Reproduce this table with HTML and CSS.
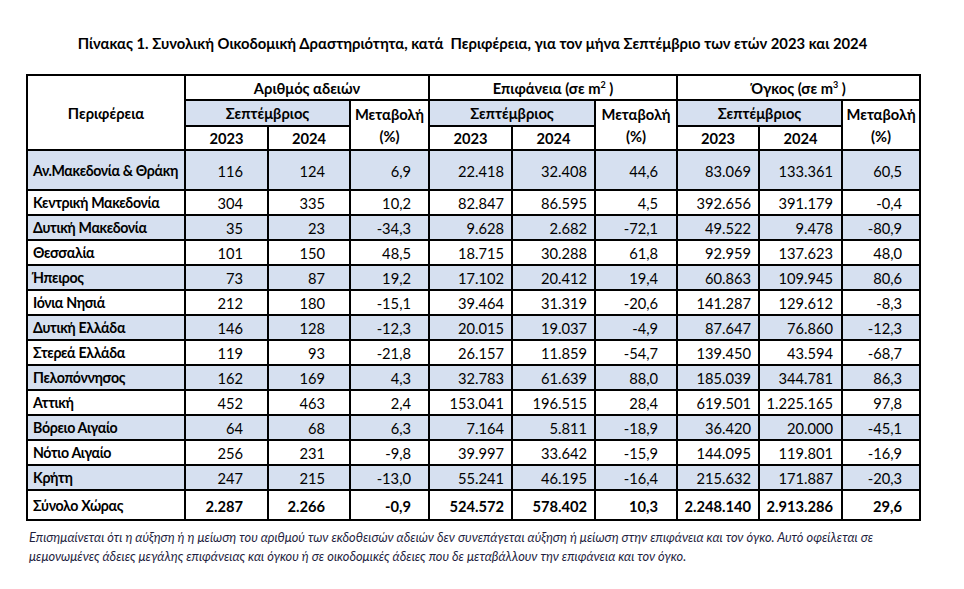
FILE: index.html
```html
<!DOCTYPE html>
<html lang="el">
<head>
<meta charset="utf-8">
<title>Πίνακας 1</title>
<link rel="stylesheet" href="styles.css">
</head>
<body>
<div class="page">
  <h1 class="title">Πίνακας 1. Συνολική Οικοδομική Δραστηριότητα, κατά&nbsp; Περιφέρεια, για τον μήνα Σεπτέμβριο των ετών 2023 και 2024</h1>
  <table class="stats">
    <colgroup>
      <col class="c1"><col class="c2"><col class="c3"><col class="c4"><col class="c5"><col class="c6"><col class="c7"><col class="c8"><col class="c9"><col class="c10">
    </colgroup>
    <thead>
      <tr class="h1">
        <th rowspan="3" class="region-head">Περιφέρεια</th>
        <th colspan="3" class="group">Αριθμός αδειών</th>
        <th colspan="3" class="group">Επιφάνεια (σε m<sup>2</sup> )</th>
        <th colspan="3" class="group">Όγκος (σε m<sup>3</sup> )</th>
      </tr>
      <tr class="h2">
        <th colspan="2" class="month">Σεπτέμβριος</th>
        <th rowspan="2" class="change">Μεταβολή<br>(%)</th>
        <th colspan="2" class="month">Σεπτέμβριος</th>
        <th rowspan="2" class="change">Μεταβολή<br>(%)</th>
        <th colspan="2" class="month">Σεπτέμβριος</th>
        <th rowspan="2" class="change">Μεταβολή<br>(%)</th>
      </tr>
      <tr class="h3">
        <th>2023</th><th>2024</th>
        <th>2023</th><th>2024</th>
        <th>2023</th><th>2024</th>
      </tr>
    </thead>
    <tbody>
      <tr class="shade first"><td>Αν.Μακεδονία &amp; Θράκη</td><td>116</td><td>124</td><td>6,9</td><td>22.418</td><td>32.408</td><td>44,6</td><td>83.069</td><td>133.361</td><td>60,5</td></tr>
      <tr><td>Κεντρική Μακεδονία</td><td>304</td><td>335</td><td>10,2</td><td>82.847</td><td>86.595</td><td>4,5</td><td>392.656</td><td>391.179</td><td>-0,4</td></tr>
      <tr class="shade"><td>Δυτική Μακεδονία</td><td>35</td><td>23</td><td>-34,3</td><td>9.628</td><td>2.682</td><td>-72,1</td><td>49.522</td><td>9.478</td><td>-80,9</td></tr>
      <tr><td>Θεσσαλία</td><td>101</td><td>150</td><td>48,5</td><td>18.715</td><td>30.288</td><td>61,8</td><td>92.959</td><td>137.623</td><td>48,0</td></tr>
      <tr class="shade"><td>Ήπειρος</td><td>73</td><td>87</td><td>19,2</td><td>17.102</td><td>20.412</td><td>19,4</td><td>60.863</td><td>109.945</td><td>80,6</td></tr>
      <tr><td>Ιόνια Νησιά</td><td>212</td><td>180</td><td>-15,1</td><td>39.464</td><td>31.319</td><td>-20,6</td><td>141.287</td><td>129.612</td><td>-8,3</td></tr>
      <tr class="shade"><td>Δυτική Ελλάδα</td><td>146</td><td>128</td><td>-12,3</td><td>20.015</td><td>19.037</td><td>-4,9</td><td>87.647</td><td>76.860</td><td>-12,3</td></tr>
      <tr><td>Στερεά Ελλάδα</td><td>119</td><td>93</td><td>-21,8</td><td>26.157</td><td>11.859</td><td>-54,7</td><td>139.450</td><td>43.594</td><td>-68,7</td></tr>
      <tr class="shade"><td>Πελοπόννησος</td><td>162</td><td>169</td><td>4,3</td><td>32.783</td><td>61.639</td><td>88,0</td><td>185.039</td><td>344.781</td><td>86,3</td></tr>
      <tr><td>Αττική</td><td>452</td><td>463</td><td>2,4</td><td>153.041</td><td>196.515</td><td>28,4</td><td>619.501</td><td>1.225.165</td><td>97,8</td></tr>
      <tr class="shade"><td>Βόρειο Αιγαίο</td><td>64</td><td>68</td><td>6,3</td><td>7.164</td><td>5.811</td><td>-18,9</td><td>36.420</td><td>20.000</td><td>-45,1</td></tr>
      <tr><td>Νότιο Αιγαίο</td><td>256</td><td>231</td><td>-9,8</td><td>39.997</td><td>33.642</td><td>-15,9</td><td>144.095</td><td>119.801</td><td>-16,9</td></tr>
      <tr class="shade"><td>Κρήτη</td><td>247</td><td>215</td><td>-13,0</td><td>55.241</td><td>46.195</td><td>-16,4</td><td>215.632</td><td>171.887</td><td>-20,3</td></tr>
      <tr class="total"><td>Σύνολο Χώρας</td><td>2.287</td><td>2.266</td><td>-0,9</td><td>524.572</td><td>578.402</td><td>10,3</td><td>2.248.140</td><td>2.913.286</td><td>29,6</td></tr>
    </tbody>
  </table>
  <p class="note">Επισημαίνεται ότι η αύξηση ή η μείωση του αριθμού των εκδοθεισών αδειών δεν συνεπάγεται αύξηση ή μείωση στην επιφάνεια και τον όγκο. Αυτό οφείλεται σε μεμονωμένες άδειες μεγάλης επιφάνειας και όγκου ή σε οικοδομικές άδειες που δε μεταβάλλουν την επιφάνεια και τον όγκο.</p>
</div>
</body>
</html>
```

FILE: styles.css
```css
html, body {
  margin: 0;
  padding: 0;
  background: #ffffff;
}

body {
  font-family: Lato, "Open Sans", "Noto Sans", sans-serif;
  color: #000000;
}

.page {
  padding: 34px 0 0 26px;
  width: 893px;
}

.title {
  margin: 0 0 22px 0;
  font-size: 14.8px;
  line-height: 18px;
  font-weight: 700;
  text-align: center;
  white-space: nowrap;
}

.stats {
  width: 893px;
  table-layout: fixed;
  border-collapse: collapse;
  font-size: 14.7px;
  line-height: 18px;
}

.c1 { width: 158px; }
.c2 { width: 83px; }
.c3 { width: 82px; }
.c4 { width: 79px; }
.c5 { width: 83px; }
.c6 { width: 83px; }
.c7 { width: 82px; }
.c8 { width: 82px; }
.c9 { width: 83px; }
.c10 { width: 78px; }

.stats th,
.stats td {
  border: 2px solid #000000;
  padding: 0;
  overflow: hidden;
  white-space: nowrap;
}

.stats th {
  font-weight: 700;
  text-align: center;
  vertical-align: middle;
}

.stats sup {
  font-size: 9px;
  line-height: 0;
  vertical-align: 6px;
}

.h1 { height: 25px; }
.h2 { height: 26px; }
.h3 { height: 24px; }

.h1 .group {
  border-bottom-width: 1px;
}

.month {
  background: #d6e0f0;
}

.change {
  line-height: 22px;
  padding-bottom: 4px;
}

.stats tbody tr { height: 25px; }
.stats tbody tr.first { height: 40px; }
.stats tbody tr.total { height: 30px; }

.stats tbody tr.shade td {
  background: #d6e0f0;
}

.stats td {
  text-align: right;
  vertical-align: middle;
  padding-top: 1px;
}

.stats td:nth-child(1) {
  text-align: left;
  font-weight: 700;
  padding-left: 5px;
  font-size: 14.2px;
  letter-spacing: -0.35px;
}

.stats td:nth-child(2) { padding-right: 24px; }
.stats td:nth-child(3) { padding-right: 24px; }
.stats td:nth-child(4) { padding-right: 17px; }
.stats td:nth-child(5) { padding-right: 7px; }
.stats td:nth-child(6) { padding-right: 7px; }
.stats td:nth-child(7) { padding-right: 18px; }
.stats td:nth-child(8) { padding-right: 7px; }
.stats td:nth-child(9) { padding-right: 8px; }
.stats td:nth-child(10) { padding-right: 17px; }

.stats tr.total td {
  font-weight: 700;
}

.note {
  margin: 7px 0 0 3px;
  width: 870px;
  font-size: 12.8px;
  line-height: 19px;
  font-style: italic;
  color: #1f1f3f;
}
```
